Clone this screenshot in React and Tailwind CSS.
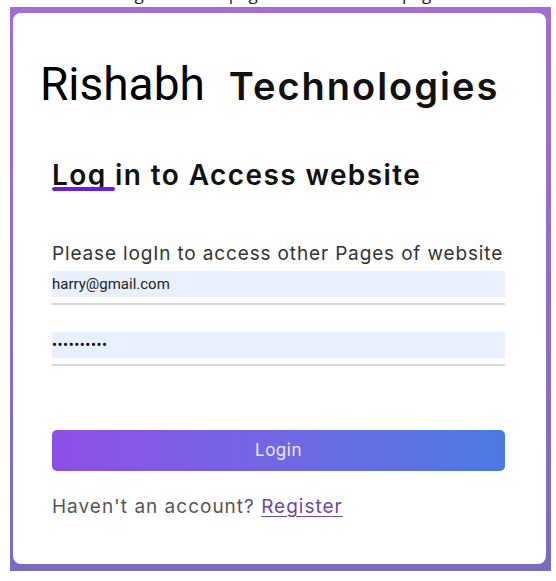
import React from 'react';

export default function App() {
  return (
    <div className="min-h-screen bg-white font-['Inter',sans-serif]">
      {/* page text scrolled off the top, only descenders visible */}
      <div className="h-[7px] overflow-hidden text-center">
        <p className="-mt-[16px] text-[17px] leading-[20px] text-[#222] font-['Open_Sans',sans-serif]">
          Login into the page to see the other page
        </p>
      </div>

      {/* gradient frame */}
      <div className="ml-[10px] mr-[5px] pt-[6px] pl-[3px] pr-[5px] pb-[7px] bg-gradient-to-b from-[#a46dd3] to-[#7a6bbf]">
        <div className="bg-white rounded-lg pl-[39px] pr-[41px] pt-[46px] pb-[45px]">
          <div className="-ml-[12px] flex items-baseline gap-[24px]">
            <span className="text-[46px] leading-[50px] text-black font-['Roboto',sans-serif]">Rishabh</span>
            <span className="text-[38px] leading-[50px] font-semibold text-[#111] tracking-[2px]">Technologies</span>
          </div>

          <h2 className="mt-[47px] relative text-[28px] leading-[34px] font-semibold text-[#111] tracking-[1.4px]">
            Log in to Access website
            <span className="absolute left-0 top-[29px] w-[63px] h-[4px] rounded-full bg-[#6a1fd6]" />
          </h2>

          <p className="mt-[50px] whitespace-nowrap text-[19px] leading-[24px] text-[#333] tracking-[0.85px]">
            Please logIn to access other Pages of website
          </p>

          <div className="mt-[5px] border-b-2 border-[#d6d6d6] pb-[6px]">
            <div className="h-[26px] bg-[#e8f0fe] flex items-center text-[15px] text-[#222] font-['Roboto',sans-serif]">
              harry@gmail.com
            </div>
          </div>

          <div className="mt-[27px] border-b-2 border-[#d6d6d6] pb-[6px]">
            <div className="h-[26px] bg-[#e8f0fe] flex items-center text-[15px] tracking-[0.5px] text-black font-['Roboto',sans-serif]">
              ••••••••••
            </div>
          </div>

          <button className="mt-[64px] w-full h-[41px] rounded-[5px] bg-gradient-to-r from-[#8c4fe6] to-[#4a7ae1] text-[17px] tracking-[0.5px] text-[#ecebfa]">
            Login
          </button>

          <p className="mt-[24px] text-[19px] leading-[24px] text-[#555] tracking-[1px]">
            Haven't an account?{' '}
            <a href="#" className="text-[#6b4a9a] underline underline-offset-[3px]">Register</a>
          </p>
        </div>
      </div>
    </div>
  );
}
